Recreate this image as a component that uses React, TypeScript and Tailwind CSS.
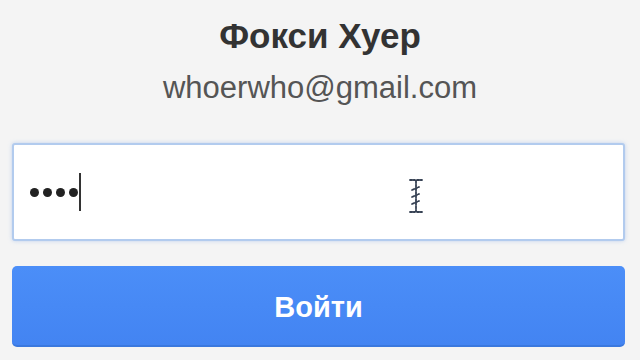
import React from "react";

function IBeam() {
  return (
    <svg width="18" height="36" viewBox="0 0 18 36" className="text-gray-700">
      <g fill="none" stroke="currentColor" strokeWidth="1.8" strokeDasharray="2.2 1.4" strokeLinecap="round">
        <path d="M3 2h5M10 2h5M9 3v30M3 34h5M10 34h5" />
        <path d="M5 12l7 -3M5 19l7 -3M5 26l7 -3" />
      </g>
    </svg>
  );
}

export default function App() {
  return (
    <div
      className="flex h-[360px] w-[640px] flex-col items-center bg-[#f4f4f4]"
      style={{ fontFamily: '"Liberation Sans", Arial, sans-serif' }}
    >
      <h1 className="mt-[16px] text-[35px] font-bold leading-[40px] text-[#333]">
        Фокси Хуер
      </h1>
      <div className="mt-[14px] text-[31px] leading-[36px] text-[#555]">
        whoerwho@gmail.com
      </div>
      <div className="ml-[12px] mt-[37px] flex h-[98px] w-[613px] items-center self-start rounded-[3px] border-2 border-[#b2cbee] bg-white pl-[16px] shadow-[0_0_4px_rgba(120,160,230,0.4)]">
        <div className="flex items-center gap-[4px]">
          <span className="h-[9px] w-[9px] rounded-full bg-[#222]" />
          <span className="h-[9px] w-[9px] rounded-full bg-[#222]" />
          <span className="h-[9px] w-[9px] rounded-full bg-[#222]" />
          <span className="h-[9px] w-[9px] rounded-full bg-[#222]" />
        </div>
        <span className="ml-[1px] h-[38px] w-[2px] bg-[#333]" />
        <div className="ml-[326px] mt-[8px]">
          <IBeam />
        </div>
      </div>
      <button className="ml-[12px] mt-[25px] flex h-[81px] w-[613px] items-center justify-center self-start rounded-[5px] border-b-2 border-[#3a78de] bg-gradient-to-b from-[#4b8ef8] to-[#4384f2] pt-[4px] text-[29px] font-bold text-white">
        Войти
      </button>
    </div>
  );
}
